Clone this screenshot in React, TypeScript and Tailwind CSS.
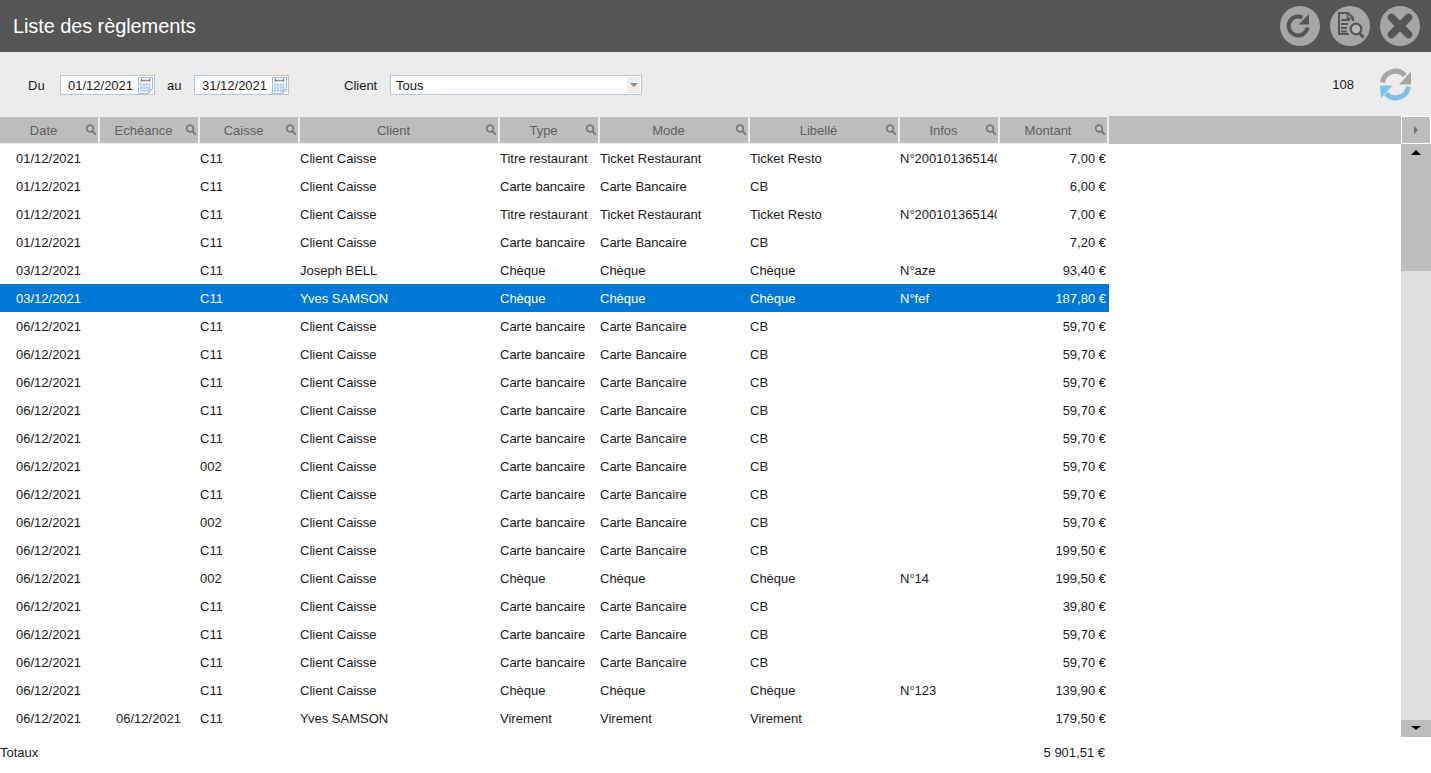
import React from 'react';

type Row = {
  date: string;
  echeance?: string;
  caisse: string;
  client: string;
  type: string;
  mode: string;
  libelle: string;
  infos?: string;
  montant: string;
  selected?: boolean;
};

const cb = (date: string, caisse: string, montant: string): Row => ({
  date,
  caisse,
  client: 'Client Caisse',
  type: 'Carte bancaire',
  mode: 'Carte Bancaire',
  libelle: 'CB',
  montant,
});

const tr = (montant: string): Row => ({
  date: '01/12/2021',
  caisse: 'C11',
  client: 'Client Caisse',
  type: 'Titre restaurant',
  mode: 'Ticket Restaurant',
  libelle: 'Ticket Resto',
  infos: 'N°200101365140',
  montant,
});

const cheque = (date: string, caisse: string, client: string, infos: string, montant: string, selected = false): Row => ({
  date,
  caisse,
  client,
  type: 'Chèque',
  mode: 'Chèque',
  libelle: 'Chèque',
  infos,
  montant,
  selected,
});

const rows: Row[] = [
  tr('7,00 €'),
  cb('01/12/2021', 'C11', '6,00 €'),
  tr('7,00 €'),
  cb('01/12/2021', 'C11', '7,20 €'),
  cheque('03/12/2021', 'C11', 'Joseph BELL', 'N°aze', '93,40 €'),
  cheque('03/12/2021', 'C11', 'Yves SAMSON', 'N°fef', '187,80 €', true),
  cb('06/12/2021', 'C11', '59,70 €'),
  cb('06/12/2021', 'C11', '59,70 €'),
  cb('06/12/2021', 'C11', '59,70 €'),
  cb('06/12/2021', 'C11', '59,70 €'),
  cb('06/12/2021', 'C11', '59,70 €'),
  cb('06/12/2021', '002', '59,70 €'),
  cb('06/12/2021', 'C11', '59,70 €'),
  cb('06/12/2021', '002', '59,70 €'),
  cb('06/12/2021', 'C11', '199,50 €'),
  cheque('06/12/2021', '002', 'Client Caisse', 'N°14', '199,50 €'),
  cb('06/12/2021', 'C11', '39,80 €'),
  cb('06/12/2021', 'C11', '59,70 €'),
  cb('06/12/2021', 'C11', '59,70 €'),
  cheque('06/12/2021', 'C11', 'Client Caisse', 'N°123', '139,90 €'),
  {
    date: '06/12/2021',
    echeance: '06/12/2021',
    caisse: 'C11',
    client: 'Yves SAMSON',
    type: 'Virement',
    mode: 'Virement',
    libelle: 'Virement',
    montant: '179,50 €',
  },
];

const headers = [
  { label: 'Date', w: 'w-[100px]' },
  { label: 'Echéance', w: 'w-[100px]' },
  { label: 'Caisse', w: 'w-[100px]' },
  { label: 'Client', w: 'w-[200px]' },
  { label: 'Type', w: 'w-[100px]' },
  { label: 'Mode', w: 'w-[150px]' },
  { label: 'Libellé', w: 'w-[150px]' },
  { label: 'Infos', w: 'w-[100px]' },
  { label: 'Montant', w: 'w-[109px]' },
];

function SearchIcon() {
  return (
    <svg width="12" height="12" viewBox="0 0 12 12" className="mb-px mr-px shrink-0">
      <circle cx="5" cy="4.500" r="3.300" fill="#c4c4c4" stroke="#777777" strokeWidth="1.700" />
      <path d="M7.600 7.200 L10.800 10.600" stroke="#777777" strokeWidth="2" />
    </svg>
  );
}

const calendarCells = [0, 1, 2, 3].flatMap((c) => [0, 1, 2].map((r) => ({ c, r })));

function CalendarIcon() {
  return (
    <svg width="15" height="17" viewBox="0 0 15 17" className="shrink-0">
      <path d="M0.500 0.500 H14.500 V12.500 L10.500 16.500 H0.500 Z" fill="#ffffff" stroke="#a3bddb" />
      <rect x="2" y="2" width="11" height="3" fill="#e4e4e4" />
      <path d="M3 3.500 H12" stroke="#8a8a8a" />
      <path d="M3.500 1.500 V4.500 M11.500 1.500 V4.500" stroke="#7d7d7d" />
      {calendarCells.map(({ c, r }) =>
        c === 3 && r === 2 ? null : (
          <rect key={`${c}-${r}`} x={2 + c * 2.8} y={6.500 + r * 3} width="2.200" height="2.300" fill="#a9c9f5" />
        )
      )}
      <path d="M10.500 16.500 V12.500 H14.500 Z" fill="#d6d6d6" stroke="#b5b5b5" strokeWidth="0.800" />
    </svg>
  );
}

function DateInput({ value }: { value: string }) {
  return (
    <div className="flex h-5 w-[95px] items-center justify-between border border-[#b5c7d9] bg-white pl-[7px] pr-px">
      <span className="pt-px">{value}</span>
      <CalendarIcon />
    </div>
  );
}

function RoundButton({ children }: { children: React.ReactNode }) {
  return (
    <div className="flex h-10 w-10 items-center justify-center rounded-full bg-[#a6a6a6]">
      {children}
    </div>
  );
}

export default function App() {
  return (
    <div
      className="flex h-[773px] w-[1431px] flex-col overflow-hidden bg-white text-[13px] text-[#1a1a1a]"
      style={{ fontFamily: '"Liberation Sans", Arial, sans-serif' }}
    >
      <header className="flex h-[52px] shrink-0 items-center justify-between bg-[#555555] pl-[13px] pr-[11px]">
        <h1 className="text-[20px] tracking-[-0.1px] text-white">Liste des règlements</h1>
        <div className="flex gap-[10px]">
          <RoundButton>
            <svg width="40" height="40" viewBox="0 0 40 40" fill="none">
              <path d="M22.500 11.500 A9.500 9.500 0 1 0 27.500 21.500" stroke="#555555" strokeWidth="4" />
              <path d="M29 8 V18.500 H18.500 Z" fill="#555555" />
            </svg>
          </RoundButton>
          <RoundButton>
            <svg width="40" height="40" viewBox="0 0 40 40" fill="none">
              <path d="M19 28 H9 V7 H18 L23 12 V15" stroke="#555555" strokeWidth="2" />
              <path d="M17.500 7 V12.500 H23" stroke="#555555" strokeWidth="1.500" />
              <path d="M11 14 H20 M11 18 H18 M11 22 H17 M11 25.500 H17" stroke="#555555" strokeWidth="2" />
              <circle cx="26" cy="23" r="5.300" fill="#b8b8b8" stroke="#555555" strokeWidth="2.200" />
              <path d="M29.500 27 L33.500 31.500" stroke="#555555" strokeWidth="3" />
            </svg>
          </RoundButton>
          <RoundButton>
            <svg width="40" height="40" viewBox="0 0 40 40" fill="none">
              <path d="M11.500 11.500 L28.500 28.500 M28.500 11.500 L11.500 28.500" stroke="#555555" strokeWidth="7.500" strokeLinecap="round" />
            </svg>
          </RoundButton>
        </div>
      </header>

      <div className="flex h-16 shrink-0 items-center bg-[#ececec] pt-[2px]">
        <span className="ml-[28px] w-[32px] pt-px">Du</span>
        <DateInput value="01/12/2021" />
        <span className="ml-[12px] w-[27px] pt-px">au</span>
        <DateInput value="31/12/2021" />
        <span className="ml-[55px] w-[46px] pt-px">Client</span>
        <div className="flex h-5 w-[252px] items-center justify-between border border-[#b5c7d9] bg-white pl-[5px] pr-px">
          <span className="pt-px">Tous</span>
          <div className="flex h-4 w-[13px] items-center justify-center bg-[#ececec]">
            <div className="h-0 w-0 border-x-[4px] border-t-[4px] border-x-transparent border-t-[#8a8a8a]" />
          </div>
        </div>
        <span className="ml-auto mr-[25px]">108</span>
        <svg width="33" height="33" viewBox="0 0 33 33" fill="none" className="mb-px mr-[19px]">
          <path d="M3.500 14.500 A13 13 0 0 1 26 7.500" stroke="#a6a6a6" strokeWidth="5" />
          <path d="M32 3.500 V16.500 H20 Z" fill="#a6a6a6" />
          <path d="M29.500 18.500 A13 13 0 0 1 7 25.500" stroke="#7cc1e6" strokeWidth="5" />
          <path d="M1 17.500 H13.500 L2 30 Z" fill="#7cc1e6" />
        </svg>
      </div>

      <div className="flex h-7 shrink-0 bg-[#ececec]">
        <div className="flex items-center">
          {headers.map((h) => (
            <div key={h.label} className={`${h.w} pr-[2px]`}>
              <div className="flex h-[26px] items-center bg-[#bdbdbd] pl-[4px] text-[#5f5f5f]">
                <span className="flex-1 pr-[2px] pt-px text-center">{h.label}</span>
                <SearchIcon />
              </div>
            </div>
          ))}
        </div>
        <div className="flex-1 bg-[#bdbdbd]" />
        <div className="flex w-[30px] items-center bg-white pl-px">
          <div className="flex h-[26px] w-[28px] items-center justify-center bg-[#bdbdbd]">
            <div className="h-0 w-0 border-y-[4px] border-l-[4px] border-y-transparent border-l-[#6f6f6f]" />
          </div>
        </div>
      </div>

      <div className="flex h-[593px] shrink-0">
        <div className="flex-1">
          {rows.map((r, i) => (
            <div
              key={i}
              className={`flex h-7 w-[1109px] items-center pt-px ${r.selected ? 'bg-[#0078d7] text-white' : ''}`}
            >
              <div className="w-[100px] pl-4">{r.date}</div>
              <div className="w-[100px] pl-4">{r.echeance}</div>
              <div className="w-[100px]">{r.caisse}</div>
              <div className="w-[200px]">{r.client}</div>
              <div className="w-[100px] whitespace-nowrap">{r.type}</div>
              <div className="w-[150px]">{r.mode}</div>
              <div className="w-[150px]">{r.libelle}</div>
              <div className="mr-[3px] w-[97px] overflow-hidden whitespace-nowrap">{r.infos}</div>
              <div className="w-[109px] pr-[3px] text-right">{r.montant}</div>
            </div>
          ))}
        </div>
        <div className="flex w-[30px] flex-col bg-[#e0e0e0]">
          <div className="flex h-[127px] justify-center bg-[#bdbdbd] pt-[6px]">
            <div className="h-0 w-0 border-x-[5px] border-b-[5px] border-x-transparent border-b-black" />
          </div>
          <div className="flex-1" />
          <div className="flex h-[17px] justify-center bg-[#bdbdbd] pt-[6px]">
            <div className="h-0 w-0 border-x-[5px] border-t-[4px] border-x-transparent border-t-black" />
          </div>
        </div>
      </div>

      <div className="flex h-[30px] w-[1105px] items-center justify-between pt-[2px]">
        <span>Totaux</span>
        <span>5 901,51 €</span>
      </div>
    </div>
  );
}
